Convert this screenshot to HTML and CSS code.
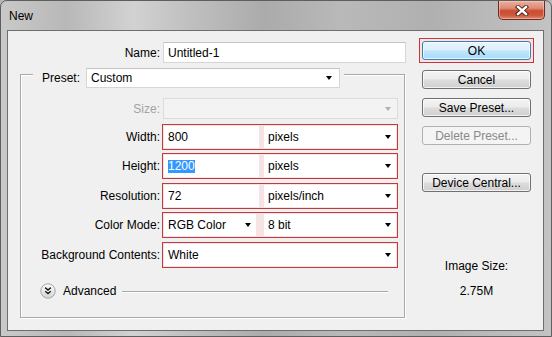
FILE: index.html
```html
<!DOCTYPE html>
<html>
<head>
<meta charset="utf-8">
<link rel="stylesheet" href="styles.css">
</head>
<body>
<div class="window">
  <div class="titlebar">
    <span class="title">New</span>
    <div class="close">
      <svg width="14" height="11" viewBox="0 0 14 11">
        <path d="M3 2 L11 9 M11 2 L3 9" stroke="#4a1a10" stroke-width="4.2" stroke-linecap="square"/>
        <path d="M3 2 L11 9 M11 2 L3 9" stroke="#ffffff" stroke-width="2.4" stroke-linecap="square"/>
      </svg>
    </div>
  </div>
  <div class="client">
    <div class="main">
      <div class="name-row">
        <span class="lbl name-lbl">Name:</span>
        <div class="field name-field">Untitled-1</div>
      </div>
      <div class="group">
        <div class="legend">
          <span class="legend-lbl">Preset:</span>
          <div class="field select preset"><span>Custom</span><i class="arrow"></i></div>
        </div>
        <div class="row size-row">
          <span class="lbl dis">Size:</span>
          <div class="field select size"><span></span><i class="arrow arrow-dis"></i></div>
        </div>
        <div class="row first-red">
          <span class="lbl">Width:</span>
          <div class="redbox">
            <div class="cell input">800</div>
            <div class="cell select unit"><span>pixels</span><i class="arrow"></i></div>
          </div>
        </div>
        <div class="row tight">
          <span class="lbl">Height:</span>
          <div class="redbox">
            <div class="cell input"><span class="sel">1200</span></div>
            <div class="cell select unit"><span>pixels</span><i class="arrow"></i></div>
          </div>
        </div>
        <div class="row">
          <span class="lbl">Resolution:</span>
          <div class="redbox">
            <div class="cell input">72</div>
            <div class="cell select unit"><span>pixels/inch</span><i class="arrow"></i></div>
          </div>
        </div>
        <div class="row tight">
          <span class="lbl">Color Mode:</span>
          <div class="redbox">
            <div class="cell select rgb"><span>RGB Color</span><i class="arrow"></i></div>
            <div class="cell select unit"><span>8 bit</span><i class="arrow"></i></div>
          </div>
        </div>
        <div class="row">
          <span class="lbl">Background Contents:</span>
          <div class="redbox">
            <div class="cell select full"><span>White</span><i class="arrow"></i></div>
          </div>
        </div>
        <div class="advanced">
          <svg class="adv-icon" width="16" height="16" viewBox="0 0 16 16">
            <defs>
              <linearGradient id="ag" x1="0" y1="0" x2="0" y2="1">
                <stop offset="0" stop-color="#ffffff"/>
                <stop offset="1" stop-color="#d4d4d4"/>
              </linearGradient>
            </defs>
            <circle cx="8" cy="8" r="7.2" fill="url(#ag)" stroke="#a2a2a2" stroke-width="1"/>
            <path d="M5.2 4.6 L8 7 L10.8 4.6 M5.2 8.2 L8 10.6 L10.8 8.2" fill="none" stroke="#1a1a1a" stroke-width="1.4"/>
          </svg>
          <span class="adv-text">Advanced</span>
          <div class="adv-rule"></div>
        </div>
      </div>
    </div>
    <div class="side">
      <div class="okbox"><div class="btn ok">OK</div></div>
      <div class="btn cancel">Cancel</div>
      <div class="btn gap9">Save Preset...</div>
      <div class="btn gap9 disabled">Delete Preset...</div>
      <div class="btn device">Device Central...</div>
      <div class="imgsize">Image Size:</div>
      <div class="imgval">2.75M</div>
    </div>
  </div>
</div>
</body>
</html>
```

FILE: styles.css
```css
* { box-sizing: border-box; }

body {
  margin: 0;
  font-family: "Liberation Sans", Arial, sans-serif;
  font-size: 12px;
  color: #000;
  background: #b8b8b8;
}

.window {
  width: 552px;
  height: 337px;
  display: flex;
  flex-direction: column;
  border: 1px solid #5e5e5e;
  border-radius: 7px 7px 0 0;
  background: linear-gradient(90deg, #c9c9c9 0%, #b8b8b8 12%, #d2d2d2 24%, #c0c0c0 34%, #ababab 48%, #b9b9b9 62%, #b0b0b0 78%, #c3c3c3 100%);
  overflow: hidden;
}

.titlebar {
  height: 29px;
  display: flex;
  justify-content: space-between;
  align-items: flex-start;
  flex: none;
}

.title {
  margin: 7px 0 0 8px;
  line-height: 16px;
  font-size: 12px;
  color: #000;
}

.close {
  width: 47px;
  height: 19px;
  margin-right: 6px;
  border: 1px solid #6a2a1c;
  border-top: none;
  border-radius: 0 0 5px 5px;
  background: linear-gradient(180deg, #eab0a0 0%, #df8a73 40%, #c84c32 55%, #cf583d 80%, #e08a70 100%);
  box-shadow: inset 0 0 0 1px rgba(255, 220, 210, 0.45);
  display: flex;
  align-items: center;
  justify-content: center;
}

.client {
  width: 537px;
  height: 301px;
  margin-left: 6px;
  border: 1px solid #6e6e6e;
  background: #f0f0f0;
  display: flex;
  flex: none;
}

.main {
  width: 411px;
  padding-left: 12px;
  flex: none;
}

.name-row {
  display: flex;
  align-items: center;
  padding-top: 11px;
  margin-left: -12px;
}

.name-lbl { width: 152px; }

.lbl {
  text-align: right;
  white-space: nowrap;
  line-height: 16px;
}

.dis { color: #a3a3a3; }

.field {
  background: #fff;
  border: 1px solid #d6d6d6;
  border-top-color: #c4c4c4;
  height: 21px;
  display: flex;
  align-items: center;
  padding-left: 4px;
  white-space: nowrap;
}

.name-field {
  width: 243px;
  margin-left: 3px;
}

.select {
  justify-content: space-between;
}

.arrow {
  width: 0;
  height: 0;
  border-left: 3.5px solid transparent;
  border-right: 3.5px solid transparent;
  border-top: 4px solid #000;
  flex: none;
}

.arrow-dis { border-top-color: #b0b0b0; }

.group {
  width: 385px;
  margin-top: 11px;
  border: 1px solid #a9a9a9;
  box-shadow: inset 1px 1px 0 #fff, 1px 1px 0 #fff;
  padding: 0 0 18px 0;
}

.legend {
  display: flex;
  align-items: center;
  margin: -7px 0 0 12px;
  padding: 0 4px 0 9px;
  background: #f0f0f0;
  width: fit-content;
}

.legend-lbl {
  width: 44px;
  line-height: 16px;
}

.preset {
  width: 254px;
  height: 20px;
  padding-right: 7px;
}

.row {
  display: flex;
  align-items: center;
  margin-top: 4px;
}

.row.tight { margin-top: 3px; }

.row .lbl { width: 139px; }

.size-row { margin-top: 10px; }

.size {
  width: 235px;
  margin-left: 3px;
  background: #f3f3f3;
  border-color: #dcdcdc;
  padding-right: 6px;
}

.row.first-red { margin-top: 5px; }

.redbox {
  width: 236px;
  height: 26px;
  margin-left: 2px;
  border: 1px solid #c23a3e;
  background: #f6e4e4;
  padding: 1px;
  display: flex;
  justify-content: space-between;
}

.cell {
  height: 22px;
  background: #fff;
  display: flex;
  align-items: center;
  padding-left: 4px;
  white-space: nowrap;
}

.input { width: 95px; }

.unit {
  width: 132px;
  padding-right: 5px;
}

.rgb {
  width: 92px;
  padding-right: 5px;
}

.full {
  width: 232px;
  padding-right: 5px;
}

.sel {
  background: #3399ff;
  color: #fff;
  line-height: 13px;
}

.advanced {
  display: flex;
  align-items: center;
  margin-top: 15px;
  padding-left: 19px;
  height: 16px;
}

.adv-icon { flex: none; }

.adv-text {
  margin-left: 7px;
  line-height: 16px;
}

.adv-rule {
  height: 1px;
  background: #a9a9a9;
  box-shadow: 0 1px 0 #fff;
  margin-left: 6px;
  width: 266px;
}

.side {
  width: 115px;
  padding-top: 7px;
  display: flex;
  flex-direction: column;
  align-items: flex-start;
  flex: none;
}

.okbox {
  width: 115px;
  height: 25px;
  border: 1px solid #c23a3e;
  background: #f6e4e4;
  padding: 2px;
}

.btn {
  width: 109px;
  height: 19px;
  border: 1px solid #707070;
  border-radius: 3px;
  background: linear-gradient(180deg, #f4f4f4 0%, #ebebeb 48%, #dddddd 52%, #cfcfcf 100%);
  box-shadow: inset 0 0 0 1px rgba(255, 255, 255, 0.7);
  display: flex;
  align-items: center;
  justify-content: center;
  line-height: 16px;
  margin-left: 3px;
  white-space: nowrap;
}

.okbox .btn { margin-left: 0; }

.ok {
  border-color: #3c7fb1;
  background: linear-gradient(180deg, #e8f5fc 0%, #dbeffa 48%, #bee6fd 52%, #a9dbf6 100%);
}

.cancel { margin-top: 7px; }

.gap9 { margin-top: 9px; }

.disabled {
  border-color: #adb2b5;
  background: #f4f4f4;
  color: #8a8a8a;
  box-shadow: none;
}

.device { margin-top: 28px; }

.imgsize {
  width: 115px;
  text-align: center;
  margin-top: 66px;
  line-height: 16px;
}

.imgval {
  width: 115px;
  text-align: center;
  margin-top: 9px;
  line-height: 16px;
}
```
